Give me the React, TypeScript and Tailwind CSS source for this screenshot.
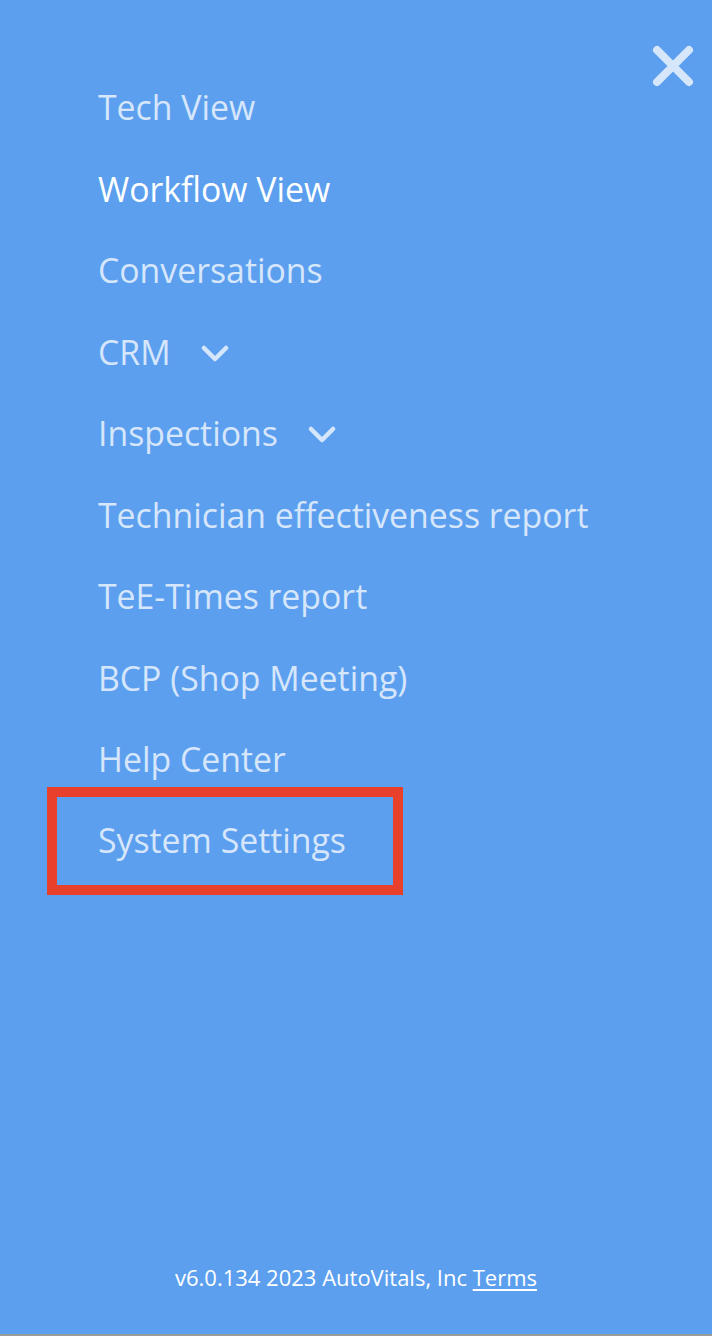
import React from "react";

const items: { label: string; active?: boolean; chevron?: boolean; boxed?: boolean }[] = [
  { label: "Tech View" },
  { label: "Workflow View", active: true },
  { label: "Conversations" },
  { label: "CRM", chevron: true },
  { label: "Inspections", chevron: true },
  { label: "Technician effectiveness report" },
  { label: "TeE-Times report" },
  { label: "BCP (Shop Meeting)" },
  { label: "Help Center" },
  { label: "System Settings", boxed: true },
];

function Chevron() {
  return (
    <svg width="28" height="18" viewBox="0 0 28 18" className="ml-[30px] mt-[4px]">
      <path d="M3 3 L14 14 L25 3" fill="none" stroke="#d6e6fb" strokeWidth="4.5" strokeLinecap="round" strokeLinejoin="round" />
    </svg>
  );
}

export default function App() {
  return (
    <div
      className="w-[712px] h-[1336px] bg-[#5c9fef] flex flex-col relative overflow-hidden border-b-2 border-[#9a9a9a]"
      style={{ fontFamily: "'Open Sans', Lato, sans-serif" }}
    >
      <button className="absolute left-[652px] top-[45px] w-[42px] h-[42px]">
        <svg width="42" height="42" viewBox="0 0 42 42">
          <path d="M5 5 L37 37 M37 5 L5 37" stroke="#d6e6fb" strokeWidth="8" strokeLinecap="round" />
        </svg>
      </button>
      <nav className="flex flex-col pt-[87px] pl-[98px]">
        {items.map((it) => (
          <div key={it.label} className="h-[81.5px] flex items-start">
            {it.boxed ? (
              <div className="-ml-[51px] -mt-[34px] w-[356px] h-[108px] border-[10px] border-[#e8402a] pl-[41px] pt-[23px]">
                <span className="text-[33.8px] leading-[40px] text-[#d6e6fb]">{it.label}</span>
              </div>
            ) : (
              <div className="flex items-center">
                <span
                  className={
                    "text-[33.8px] leading-[40px] " +
                    (it.active ? "text-white" : "text-[#d6e6fb]")
                  }
                >
                  {it.label}
                </span>
                {it.chevron && <Chevron />}
              </div>
            )}
          </div>
        ))}
      </nav>
      <div className="mt-auto mb-[43px] text-center text-white text-[22px] leading-[28px] font-medium">
        v6.0.134 2023 AutoVitals, Inc <span className="underline underline-offset-[3px]">Terms</span>
      </div>
    </div>
  );
}
